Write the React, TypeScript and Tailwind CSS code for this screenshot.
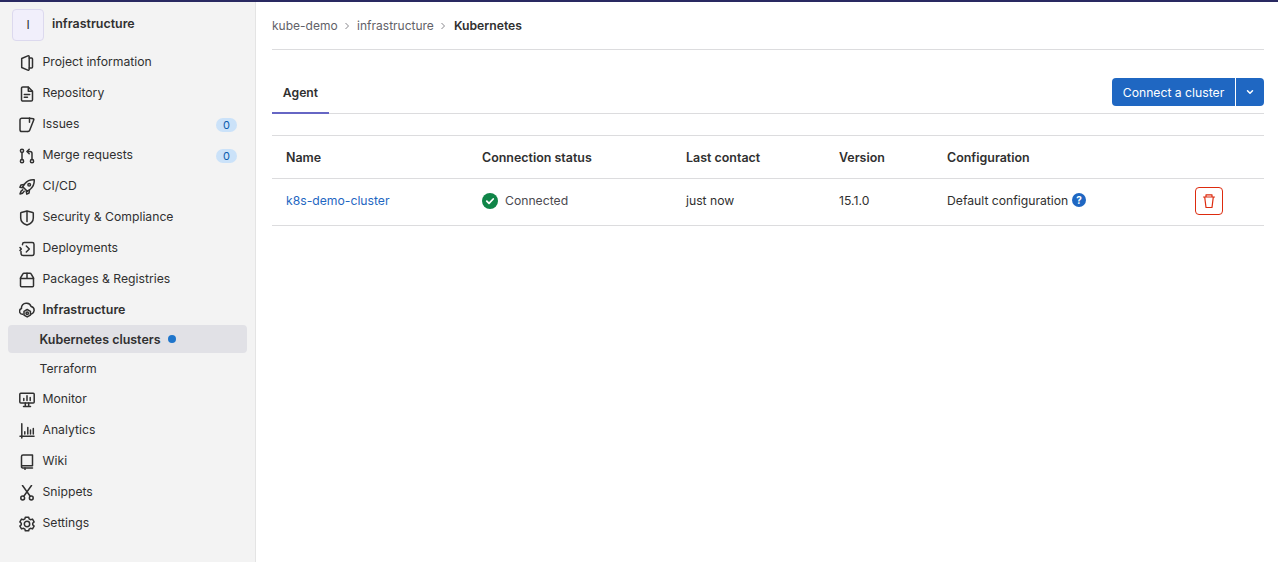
import React from "react";

const P = { fill: "none", stroke: "#303030", strokeWidth: 1.5, strokeLinecap: "round" as const, strokeLinejoin: "round" as const };
const Ic = ({ children }: { children: React.ReactNode }) => (
  <svg width="16" height="16" viewBox="0 0 16 16" {...P} className="shrink-0">{children}</svg>
);

const icons: Record<string, React.ReactNode> = {
  project: <Ic><path d="M2.700 3.500 8.800 .900A1 1 0 0 1 10.200 1.800V14.200A1 1 0 0 1 8.800 15.100L2.700 12.500V3.500Z" /><path d="M10.200 3h2.300a1 1 0 0 1 1 1v8a1 1 0 0 1-1 1h-2.300" /></Ic>,
  repo: <Ic><path d="M9.300 1H3.800a1.300 1.300 0 0 0-1.300 1.300v11.400A1.300 1.300 0 0 0 3.800 15h8.400a1.300 1.300 0 0 0 1.300-1.300V5.200Z" /><path d="M9.300 1.200v4h4" /><path d="M5.300 8.500h5.400M5.300 11.200h3.200" /></Ic>,
  issues: <Ic><path d="M10.500 1.300H2.800A1.800 1.800 0 0 0 1 3.100v9.600a1.800 1.800 0 0 0 1.800 1.800h6" /><path d="M10.500 1.300v4" /><path d="M10.500 1.300 14.300 1.800a.7.700 0 0 1 .5 1L10.700 13.300a1.800 1.800 0 0 1-1.700 1.200" /></Ic>,
  merge: <Ic><circle cx="3" cy="2.800" r="1.600" /><circle cx="3" cy="13.200" r="1.600" /><circle cx="13" cy="13.200" r="1.600" /><path d="M3 4.400v7.200" /><path d="M13 11.600V5.500a2 2 0 0 0-2-2H8.300" /><path d="M10.200 1.300 8 3.500l2.200 2.200" /></Ic>,
  rocket: <Ic><path d="M15.200.800c-4-.3-7 1.100-9.200 3.700L3.700 7.700l4.600 4.600 3.200-2.300c2.600-2.200 4-5.200 3.700-9.200Z" /><circle cx="10.200" cy="5.800" r="1.300" /><path d="M5 5.500 2 5.900.900 8.200l3 .6M10.500 11l-.4 3-2.300 1.100-.6-3" /><path d="M3.800 10.800c-1.500.6-2.400 2-2.800 4.200 2.200-.4 3.600-1.300 4.200-2.800" /></Ic>,
  shield: <Ic><path d="M8 1 2.300 2.500A.8.800 0 0 0 1.700 3.300V8c0 3.300 2.700 5.800 6.300 7 3.600-1.200 6.300-3.700 6.300-7V3.300a.8.800 0 0 0-.6-.8Z" /><path d="M8 1.500v10" /></Ic>,
  deploy: <Ic><path d="M3.500 3.800V3.200A1.800 1.800 0 0 1 5.300 1.500h7.900a1.800 1.800 0 0 1 1.800 1.700v9.600a1.800 1.800 0 0 1-1.800 1.700H4.300a2.300 2.300 0 0 1-2.300-2.300v-1.700" /><path d="m7.300 5 3 3-3 3" /><path d="M1 6.500 2.300 8 1 9.500" /></Ic>,
  packages: <Ic><path d="M5 1.300h6c.500 0 .900.200 1.100.600L14.500 6v7.700a1 1 0 0 1-1 1h-11a1 1 0 0 1-1-1V6l2.400-4.100c.2-.4.600-.6 1.100-.6Z" /><path d="M1.500 6.500h13M8 1.300v5.200" /></Ic>,
  infra: <Ic><path d="M3.800 12.300H3.400A3 3 0 0 1 2.500 6.500 4.600 4.600 0 0 1 7.300 1.200a4.600 4.600 0 0 1 4.800 3.300 3.900 3.900 0 0 1 3 4.200 3.800 3.800 0 0 1-2.600 3.300" /><circle cx="8.200" cy="11.200" r="1.200" /><path d="m8.200 7.500 3.200 1.850v3.700l-3.200 1.850-3.200-1.850v-3.700Z" /></Ic>,
  monitor: <Ic><rect x=".8" y="1.300" width="14.400" height="9.700" rx="1" /><path d="M4.500 14.500h7M6.300 11v3.500M9.700 11v3.500M4.800 8.500V6.500M8 8.500V3.800M11.200 8.500V5.500" /></Ic>,
  analytics: <Ic><path d="M2.800 .8v14.200M1 13.200h14" /><path d="M5.800 11V8.800M8.800 11V4.500M11.500 11V7M14.300 11V5.500" /></Ic>,
  wiki: <Ic><path d="M2.500 12.700V2.500A1.500 1.500 0 0 1 4 1h9.500v10.700H3.700a1.300 1.300 0 0 0-1.200 1 1.200 1.200 0 0 0 1.200 1.300h9.800" /><path d="M6 14v1.500" /></Ic>,
  snippets: <Ic><circle cx="3.700" cy="13" r="1.900" /><circle cx="12.300" cy="13" r="1.900" /><path d="M3.500.500 11.200 11.300M12.500.500 4.800 11.300" /></Ic>,
  settings: <Ic><circle cx="8" cy="8" r="2.700" /><path d="M6.300 1.300h3.400l.4 1.600 1.400.8 2-.6 1.600 2.800-1.400 1.400v1.400l1.400 1.400-1.600 2.800-2-.6-1.400.8-.4 1.600H6.300l-.4-1.600-1.400-.8-2 .6-1.600-2.800 1.400-1.400V7.300L.9 5.900l1.600-2.800 2 .6 1.400-.8Z" /></Ic>,
};

const Item = ({ icon, label, badge, bold, h = "h-[31px]" }: { icon: string; label: string; badge?: boolean; bold?: boolean; h?: string }) => (
  <div className={`flex items-center pl-[19px] pr-[18px] gap-[7.500px] ${h} ${bold ? "font-semibold text-[12.450px]" : ""}`}>
    {icons[icon]}
    <span className="flex-1">{label}</span>
    {badge && <span className="w-[21px] h-[14px] rounded-full bg-[#cbe2f9] text-[#0b5cad] text-[11px] leading-[14px] text-center">0</span>}
  </div>
);

const Chevron = () => (
  <svg width="8" height="8" viewBox="0 0 8 8" fill="none" stroke="#89888d" strokeWidth="1" className="shrink-0"><path d="m2.500 1 3 3-3 3" /></svg>
);

export default function App() {
  return (
    <div className="w-[1278px] h-[562px] overflow-hidden bg-white text-[#303030] text-[12.2px] border-t-2 border-[#292961] flex font-['Inter',sans-serif]">
      <aside className="w-[256px] shrink-0 bg-[#f3f3f3] border-r border-[#e4e4e4]">
        <div className="flex items-center gap-[8px] pl-[12px] pt-[5px] pb-[3px] h-[43px]">
          <div className="w-[32px] h-[32px] rounded-[4px] bg-[#f1effb] border border-[#dcd9ee] flex items-center justify-center text-[12px]">I</div>
          <span className="font-semibold text-[12.450px]">infrastructure</span>
        </div>
        <div className="mt-[2px]">
          <Item icon="project" label="Project information" />
          <Item icon="repo" label="Repository" />
          <Item icon="issues" label="Issues" badge />
          <Item icon="merge" label="Merge requests" badge />
          <Item icon="rocket" label="CI/CD" />
          <Item icon="shield" label="Security & Compliance" />
          <Item icon="deploy" label="Deployments" />
          <Item icon="packages" label="Packages & Registries" />
          <Item icon="infra" label="Infrastructure" bold h="h-[30px]" />
          <div className="mx-[8px] h-[28px] rounded-[4px] bg-[#e1e1e6] pl-[31.500px] pt-[2px] flex items-center gap-[7px] font-semibold text-[12.450px]">
            <span>Kubernetes clusters</span>
            <span className="w-[8px] h-[8px] rounded-full bg-[#1f75cb] -mt-[2px]" />
          </div>
          <div className="h-[31px] pl-[39.500px] pt-[2px] flex items-center">Terraform</div>
          <Item icon="monitor" label="Monitor" />
          <Item icon="analytics" label="Analytics" />
          <Item icon="wiki" label="Wiki" />
          <Item icon="snippets" label="Snippets" />
          <Item icon="settings" label="Settings" />
        </div>
      </aside>
      <main className="flex-1 pl-[16px] pr-[14px]">
        <div className="h-[48px] border-b border-[#dcdcde] flex items-center gap-[5.500px] pt-[1px] text-[12px] text-[#626168]">
          <span>kube-demo</span>
          <Chevron />
          <span className="ml-[0.500px]">infrastructure</span>
          <Chevron />
          <span className="ml-[1px] font-semibold text-[12.200px] text-[#303030]">Kubernetes</span>
        </div>
        <div className="mt-[14px] h-[50px] border-b border-[#dcdcde] flex items-end justify-between relative">
          <div className="h-[36px] w-[57px] -mb-[1px] border-b-2 border-[#6666c4] text-center font-semibold leading-[29px]">Agent</div>
          <div className="flex gap-[1px] mb-[7px] text-white">
            <div className="w-[123px] h-[28px] rounded-l-[4px] bg-[#1f67c2] pt-[2px] flex items-center justify-center">Connect a cluster</div>
            <div className="w-[28px] h-[28px] rounded-r-[4px] bg-[#1f67c2] flex items-center justify-center">
              <svg width="10" height="10" viewBox="0 0 10 10" fill="none" stroke="#fff" strokeWidth="1.500" strokeLinecap="round" strokeLinejoin="round"><path d="m2.500 3.800 2.500 2.500 2.500-2.500" /></svg>
            </div>
          </div>
        </div>
        <div className="mt-[21px] border-t border-[#dcdcde]">
          <div className="h-[43px] border-b border-[#dcdcde] grid grid-cols-[196px_204px_153px_108px_1fr] items-center pl-[14px] pt-[2px] font-semibold text-[12.450px]">
            <span>Name</span>
            <span>Connection status</span>
            <span>Last contact</span>
            <span>Version</span>
            <span>Configuration</span>
          </div>
          <div className="h-[47px] border-b border-[#dcdcde] grid grid-cols-[196px_204px_153px_108px_248px_auto] items-center pl-[14px]">
            <span className="text-[#1f67c2] -mt-[2px]">k8s-demo-cluster</span>
            <span className="flex items-center gap-[7px] text-[#4b4a50] -mt-[2px]">
              <svg width="16" height="16" viewBox="0 0 16 16" className="mt-[1px]"><circle cx="8" cy="8" r="8" fill="#108548" /><path d="m4.800 8.200 2.200 2.200 4.200-4.400" fill="none" stroke="#fff" strokeWidth="1.800" strokeLinecap="round" strokeLinejoin="round" /></svg>
              Connected
            </span>
            <span className="-mt-[2px]">just now</span>
            <span className="-mt-[2px]">15.1.0</span>
            <span className="flex items-center gap-[4px] -mt-[2px]">
              Default configuration
              <svg width="14" height="14" viewBox="0 0 14 14" className="-mt-[2px]"><circle cx="7" cy="7" r="7" fill="#1f67c2" /><text x="7" y="10.500" textAnchor="middle" fontSize="10" fontWeight="700" fill="#fff" fontFamily="Inter, sans-serif">?</text></svg>
            </span>
            <div className="w-[28px] h-[28px] rounded-[4px] border border-[#dd2b0e] flex items-center justify-center -mt-[3px]">
              <svg width="16" height="16" viewBox="0 0 16 16" fill="none" stroke="#dd2b0e" strokeWidth="1.200" strokeLinejoin="round" strokeLinecap="round"><path d="M2.500 4h11M5 4V1.800h6V4M3.700 4l1.300 10.500h6l1.300-10.500" /></svg>
            </div>
          </div>
        </div>
      </main>
    </div>
  );
}
